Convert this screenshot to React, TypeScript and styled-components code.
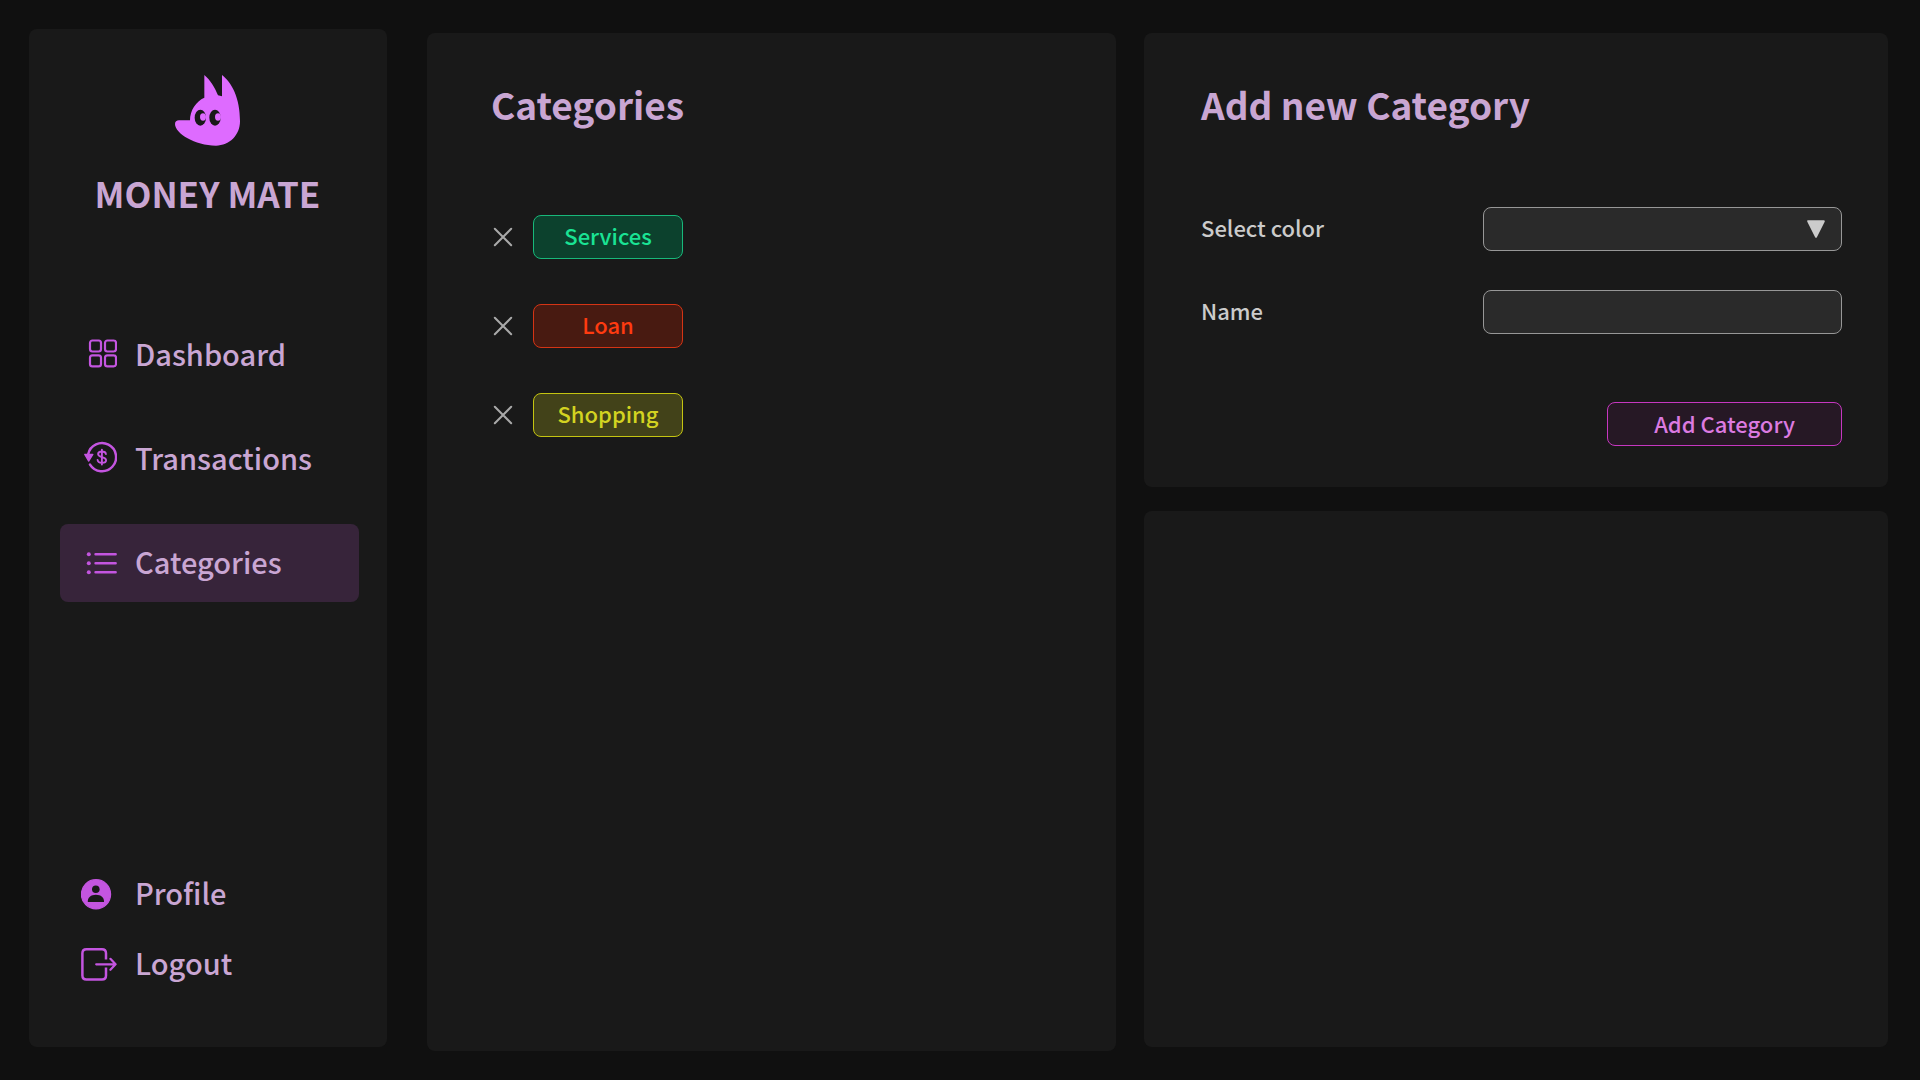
import React from "react";
import styled, { createGlobalStyle } from "styled-components";

const GlobalStyle = createGlobalStyle`
  *, *::before, *::after { box-sizing: border-box; }
  body {
    margin: 0;
    background: #101010;
    color: #cbcbcb;
    font-family: "Noto Sans CJK JP", "Noto Sans", sans-serif;
    font-weight: 500;
  }
  h1, h2, ul, p { margin: 0; padding: 0; }
  ul { list-style: none; }
  button, input, select { font: inherit; color: inherit; }
`;

const Page = styled.div`
  display: grid;
  grid-template-columns: 358px minmax(0, 1fr);
  gap: 40px;
  min-height: 100vh;
  padding: 29px 32px 33px 29px;
`;

const Panel = styled.section`
  background: #191919;
  border-radius: 8px;
`;

const Sidebar = styled(Panel).attrs({ as: "aside" })`
  display: flex;
  flex-direction: column;
  padding: 46px 28px 48px 31px;
`;

const Brand = styled.div`
  display: flex;
  flex-direction: column;
  align-items: center;
  gap: 24px;
  margin-bottom: 100px;
  padding-right: 4px;
`;

const BrandName = styled.h1`
  font-size: 35px;
  line-height: 46px;
  font-weight: 600;
  color: #c9a6d3;
`;

const NavList = styled.ul<{ $gap: number; $bottom?: boolean }>`
  display: flex;
  flex-direction: column;
  gap: ${(p) => p.$gap}px;
  margin-top: ${(p) => (p.$bottom ? "auto" : "0")};
`;

const NavLink = styled.a<{ $active?: boolean; $compact?: boolean }>`
  display: flex;
  align-items: center;
  gap: 18px;
  height: ${(p) => (p.$compact ? 70 : 78)}px;
  padding: 0 21px;
  border-radius: 8px;
  background: ${(p) => (p.$active ? "#37243a" : "transparent")};
  color: #c9a6d3;
  text-decoration: none;
`;

const NavText = styled.span`
  padding-bottom: 4px;
  font-size: 29px;
  line-height: 44px;
`;

const NavIcon = styled.svg`
  flex: none;
  width: 36px;
  height: 36px;
  color: #c455e0;
  fill: none;
  stroke: currentColor;
  stroke-linecap: round;
  stroke-linejoin: round;
`;

const Content = styled.main`
  display: grid;
  grid-template-columns: minmax(0, 689fr) minmax(0, 744fr);
  gap: 28px;
  padding-top: 4px;
`;

const CategoriesPanel = styled(Panel)`
  margin-bottom: -4px;
  padding: 44px 64px;
`;

const SideColumn = styled.div`
  display: flex;
  flex-direction: column;
  gap: 24px;
`;

const FormPanel = styled(Panel)`
  padding: 44px 46px 41px 57px;
`;

const EmptyPanel = styled(Panel)`
  flex: 1;
`;

const Heading = styled.h2`
  font-size: 37px;
  line-height: 54px;
  font-weight: 600;
  color: #c9a6d3;
`;

const CategoryList = styled.ul`
  display: flex;
  flex-direction: column;
  gap: 45px;
  margin-top: 84px;
`;

const CategoryRow = styled.li`
  display: flex;
  align-items: center;
  gap: 18px;
`;

const RemoveButton = styled.button`
  display: flex;
  padding: 2px;
  border: 0;
  background: none;
  color: #a9a9a9;
  cursor: pointer;
`;

const Tag = styled.span<{ $text: string; $line: string; $fill: string }>`
  width: 150px;
  height: 44px;
  border: 1px solid ${(p) => p.$line};
  border-radius: 8px;
  background: ${(p) => p.$fill};
  color: ${(p) => p.$text};
  font-size: 22px;
  line-height: 38px;
  text-align: center;
`;

const Form = styled.form`
  display: flex;
  flex-direction: column;
  gap: 39px;
  margin-top: 76px;
`;

const Field = styled.div`
  display: flex;
  align-items: center;
  justify-content: space-between;
`;

const Label = styled.label`
  padding-bottom: 4px;
  font-size: 22px;
  line-height: 32px;
`;

const Control = styled.div`
  position: relative;
  width: 359px;
`;

const TextInput = styled.input`
  display: block;
  width: 100%;
  height: 44px;
  padding: 0 16px;
  border: 1px solid #979797;
  border-radius: 8px;
  background: #2a2a2a;
  font-size: 22px;
  outline: none;
`;

const Select = styled(TextInput).attrs({ as: "select" })`
  appearance: none;
  padding-right: 48px;
`;

const Arrow = styled.svg`
  position: absolute;
  right: 17px;
  top: 13px;
  pointer-events: none;
`;

const SubmitButton = styled.button`
  align-self: flex-end;
  width: 235px;
  height: 44px;
  margin-top: 29px;
  padding: 0 0 2px;
  border: 1px solid #c637c0;
  border-radius: 8px;
  background: #261825;
  color: #dc7ae0;
  font-size: 22px;
  line-height: 38px;
  cursor: pointer;
`;

const FoxLogo = () => (
  <svg width="65" height="71" viewBox="45 31 195 213" aria-hidden="true">
    <path
      fill="#de6bff"
      d="M133 31C150 45 165 69 174 92L186 95V31C215 54 240 98 240 170C240 212 208 243 168 243C105 243 45 206 45 178C45 171 50 167 57 167H90C90 137 108 110 133 99Z"
    />
    <g fill="#191919">
      <ellipse cx="121" cy="159" rx="17" ry="24" />
      <ellipse cx="165" cy="159" rx="17" ry="24" />
    </g>
    <g fill="#de6bff">
      <ellipse cx="129" cy="157" rx="9" ry="11" />
      <ellipse cx="174" cy="157" rx="9" ry="11" />
    </g>
  </svg>
);

const DashboardIcon = () => (
  <NavIcon viewBox="0 0 36 36" strokeWidth="2.2">
    <rect x="9" y="3.5" width="11" height="11" rx="2.4" />
    <rect x="24" y="3.5" width="11" height="11" rx="2.4" />
    <rect x="9" y="18.3" width="11" height="11" rx="2.4" />
    <rect x="24" y="18.3" width="11" height="11" rx="2.4" />
  </NavIcon>
);

const TransactionsIcon = () => (
  <NavIcon viewBox="0 0 36 36" strokeWidth="2.5">
    <path d="M7.2 13.2A14.1 14.1 0 1 1 9 23.6" />
    <path d="M3.8 13.4H11.8L7.6 20Z" fill="currentColor" strokeWidth="1.4" />
    <path
      strokeWidth="1.9"
      d="M20.9 8.6V23.6M24.9 13C24.7 11.4 23.2 10.5 20.9 10.5C18.6 10.5 17.1 11.5 17.1 13.1C17.1 14.9 18.6 15.5 20.9 16.1C23.3 16.7 25.1 17.4 25.1 19.2C25.1 20.9 23.4 21.8 20.9 21.8C18.4 21.8 16.8 20.8 16.6 19"
    />
  </NavIcon>
);

const CategoriesIcon = () => (
  <NavIcon viewBox="0 0 36 36" strokeWidth="2.6">
    <path d="M14.6 9.3H34.6M14.6 18.3H34.6M14.6 27.3H34.6" />
    <g fill="currentColor" stroke="none">
      <circle cx="7.8" cy="9.3" r="2" />
      <circle cx="7.8" cy="18.3" r="2" />
      <circle cx="7.8" cy="27.3" r="2" />
    </g>
  </NavIcon>
);

const ProfileIcon = () => (
  <NavIcon viewBox="0 0 36 36">
    <circle cx="15" cy="18.3" r="14.6" fill="currentColor" strokeWidth="1.2" />
    <g fill="#191919" stroke="none">
      <circle cx="14.8" cy="13.3" r="3.8" />
      <path d="M6.8 26C6.4 21.6 10 18.8 14.9 18.8S23.4 21.6 23 26Z" />
    </g>
  </NavIcon>
);

const LogoutIcon = () => (
  <NavIcon viewBox="0 0 36 36" strokeWidth="2.5">
    <path
      strokeLinecap="butt"
      d="M25 13.6V7.2Q25 3.2 21 3.2H5.4Q1.4 3.2 1.4 7.2V29.4Q1.4 33.4 5.4 33.4H21Q25 33.4 25 29.4V21.4"
    />
    <path strokeWidth="2.2" d="M15.2 18.3H34.6M29.4 12.8L34.6 18.3L29.4 23.8" />
  </NavIcon>
);

const CrossIcon = () => (
  <svg width="20" height="20" viewBox="0 0 20 20" fill="none" stroke="currentColor" strokeWidth="2" strokeLinecap="round">
    <path d="M1.8 1.8L18.2 18.2M18.2 1.8L1.8 18.2" />
  </svg>
);

const mainLinks = [
  { name: "Dashboard", Icon: DashboardIcon },
  { name: "Transactions", Icon: TransactionsIcon },
  { name: "Categories", Icon: CategoriesIcon, active: true },
];

const accountLinks = [
  { name: "Profile", Icon: ProfileIcon },
  { name: "Logout", Icon: LogoutIcon },
];

const categories = [
  { name: "Services", text: "#1ae394", line: "#18b87a", fill: "#0c412d" },
  { name: "Loan", text: "#ff3b10", line: "#d43415", fill: "#481a11" },
  { name: "Shopping", text: "#d3d321", line: "#c4c411", fill: "#424219" },
];

export default function App() {
  return (
    <>
      <GlobalStyle />
      <Page>
        <Sidebar>
          <Brand>
            <FoxLogo />
            <BrandName>MONEY MATE</BrandName>
          </Brand>
          <NavList $gap={26}>
            {mainLinks.map(({ name, Icon, active }) => (
              <li key={name}>
                <NavLink href="#" $active={active} aria-current={active ? "page" : undefined}>
                  <Icon />
                  <NavText>{name}</NavText>
                </NavLink>
              </li>
            ))}
          </NavList>
          <NavList $gap={0} $bottom>
            {accountLinks.map(({ name, Icon }) => (
              <li key={name}>
                <NavLink href="#" $compact>
                  <Icon />
                  <NavText>{name}</NavText>
                </NavLink>
              </li>
            ))}
          </NavList>
        </Sidebar>
        <Content>
          <CategoriesPanel>
            <Heading>Categories</Heading>
            <CategoryList>
              {categories.map((c) => (
                <CategoryRow key={c.name}>
                  <RemoveButton type="button" aria-label={`Remove ${c.name}`}>
                    <CrossIcon />
                  </RemoveButton>
                  <Tag $text={c.text} $line={c.line} $fill={c.fill}>
                    {c.name}
                  </Tag>
                </CategoryRow>
              ))}
            </CategoryList>
          </CategoriesPanel>
          <SideColumn>
            <FormPanel>
              <Heading>Add new Category</Heading>
              <Form onSubmit={(e) => e.preventDefault()}>
                <Field>
                  <Label htmlFor="color">Select color</Label>
                  <Control>
                    <Select id="color" defaultValue="">
                      <option value="" />
                    </Select>
                    <Arrow width="18" height="18" viewBox="0 0 18 18" aria-hidden="true">
                      <path
                        d="M1.2 1.2H16.8L9 16.8Z"
                        fill="#cbcbcb"
                        stroke="#cbcbcb"
                        strokeWidth="2"
                        strokeLinejoin="round"
                      />
                    </Arrow>
                  </Control>
                </Field>
                <Field>
                  <Label htmlFor="name">Name</Label>
                  <Control>
                    <TextInput id="name" type="text" />
                  </Control>
                </Field>
                <SubmitButton type="submit">Add Category</SubmitButton>
              </Form>
            </FormPanel>
            <EmptyPanel />
          </SideColumn>
        </Content>
      </Page>
    </>
  );
}
